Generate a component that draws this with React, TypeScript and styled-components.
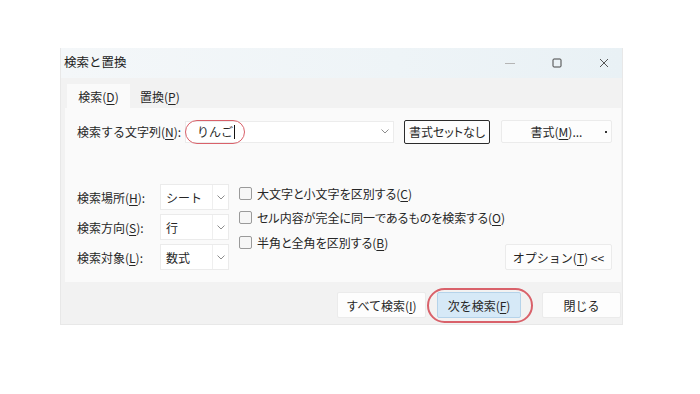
import React from "react";
import styled, { createGlobalStyle } from "styled-components";

const Global = createGlobalStyle`
  html, body { margin: 0; padding: 0; background: #ffffff; }
  body { font-family: "Noto Sans CJK JP", "Noto Sans", sans-serif; font-size: 12px; color: #262626; }
  * { box-sizing: border-box; }
`;

const Page = styled.div`
  width: 700px;
  height: 394px;
  padding: 48px 0 0 60px;
`;

const Dialog = styled.div`
  width: 563px;
  height: 277px;
  background: #f2f2f2;
  border: 1px solid #e8e8e8;
  border-top: none;
  display: flex;
  flex-direction: column;
`;

const TitleBar = styled.div`
  height: 30px;
  display: flex;
  align-items: center;
  gap: 27px;
  padding: 0 8px 0 3px;
  background: linear-gradient(90deg, #f4f7f9 0%, #eef4f7 60%, #e9f1f5 100%);
`;

const Title = styled.div`
  flex: 1;
  font-size: 12.5px;
  color: #222;
  margin-top: -4px;
`;

const WinButton = styled.div`
  width: 20px;
  height: 30px;
  display: flex;
  align-items: center;
  justify-content: center;
`;

const TabStrip = styled.div`
  height: 30px;
  display: flex;
  align-items: flex-end;
  padding-left: 6px;
`;

const Tab = styled.div<{ $active?: boolean }>`
  height: 24px;
  width: ${(p) => (p.$active ? "63px" : "auto")};
  padding: ${(p) => (p.$active ? "0" : "0 0 0 10px")};
  display: flex;
  align-items: center;
  justify-content: center;
  background: ${(p) => (p.$active ? "#fafafa" : "transparent")};
  font-size: 12px;
`;

const U = styled.span`
  text-decoration: underline;
  text-underline-offset: 2px;
`;

const Panel = styled.div`
  margin: 0 1px 0 4px;
  height: 174px;
  background: #fafafa;
  padding: 12px 9px 12px 12px;
  display: flex;
  flex-direction: column;
  justify-content: space-between;
`;

const SearchRow = styled.div`
  display: flex;
  align-items: center;
  height: 23px;
`;

const FieldLabel = styled.div`
  width: 108px;
  white-space: nowrap;
`;

const Combo = styled.div`
  position: relative;
  width: 209px;
  height: 22px;
  background: #ffffff;
  border: 1px solid #ececec;
  display: flex;
  align-items: center;
  padding-left: 11px;
`;

const Caret = styled.span`
  display: inline-block;
  width: 1px;
  height: 14px;
  background: #111;
  margin-left: 1px;
  vertical-align: middle;
`;

const Oval = styled.div<{ $t: number; $r: number; $b: number; $l: number; $w: number; $rad: number }>`
  position: absolute;
  top: ${(p) => p.$t}px;
  right: ${(p) => p.$r}px;
  bottom: ${(p) => p.$b}px;
  left: ${(p) => p.$l}px;
  border: ${(p) => p.$w}px solid #d9616a;
  border-radius: ${(p) => p.$rad}px;
  pointer-events: none;
`;

const Arrow = styled.div<{ $divider?: boolean }>`
  position: absolute;
  right: 0;
  top: 0;
  bottom: 0;
  width: 16px;
  display: flex;
  align-items: center;
  justify-content: center;
  border-left: ${(p) => (p.$divider ? "1px solid #efefef" : "none")};
`;

const Button = styled.div<{
  $w: number;
  $h?: number;
  $primary?: boolean;
  $strong?: boolean;
  $ml?: number;
  $mr?: number;
}>`
  position: relative;
  width: ${(p) => p.$w}px;
  height: ${(p) => p.$h ?? 26}px;
  margin-left: ${(p) => p.$ml ?? 0}px;
  margin-right: ${(p) => p.$mr ?? 0}px;
  flex-shrink: 0;
  display: flex;
  align-items: center;
  justify-content: center;
  background: ${(p) => (p.$primary ? "#d6e9f7" : "#fdfdfd")};
  border: 1px solid ${(p) => (p.$strong ? "#2b2b2b" : p.$primary ? "#b5d3ea" : "#ebebeb")};
  border-radius: 2px;
  white-space: nowrap;
  font-size: 12px;
  font-feature-settings: ${(p) => (p.$strong ? '"palt"' : "normal")};
`;

const Dot = styled.span`
  position: absolute;
  right: 4px;
  top: 10px;
  width: 2px;
  height: 2px;
  background: #333;
`;

const Options = styled.div`
  display: flex;
  align-items: flex-end;
`;

const SelectGrid = styled.div`
  display: grid;
  grid-template-columns: 83px 69px;
  row-gap: 4px;
  align-items: center;
  flex-shrink: 0;
`;

const Select = styled.div`
  position: relative;
  height: 26px;
  background: #ffffff;
  border: 1px solid #ebebeb;
  display: flex;
  align-items: center;
  padding-left: 5px;
`;

const Checks = styled.div`
  margin-left: 10px;
  align-self: flex-start;
  display: flex;
  flex-direction: column;
  gap: 6.5px;
  flex: 1;
  min-width: 0;
  white-space: nowrap;
  font-feature-settings: "palt";
`;

const CheckRow = styled.div`
  display: flex;
  align-items: center;
  height: 18px;
`;

const Box = styled.span`
  width: 13px;
  height: 13px;
  flex-shrink: 0;
  border: 1px solid #9a9a9a;
  border-radius: 2px;
  background: #f6f6f6;
  margin-right: 5px;
`;

const Footer = styled.div`
  flex: 1;
  display: flex;
  justify-content: flex-end;
  align-items: flex-start;
  padding: 10px 1px 0 0;
  gap: 11px;
`;

const Chevron = () => (
  <svg width="8" height="5" viewBox="0 0 8 5">
    <path d="M0.5 0.5 L4 4 L7.5 0.5" fill="none" stroke="#8d8d8d" strokeWidth="1" />
  </svg>
);

export default function App() {
  return (
    <Page>
      <Global />
      <Dialog>
        <TitleBar>
          <Title>検索と置換</Title>
          <WinButton>
            <svg width="10" height="10" viewBox="0 0 10 10">
              <path d="M0 5.5 H10" stroke="#b5b5b5" strokeWidth="1" />
            </svg>
          </WinButton>
          <WinButton>
            <svg width="10" height="10" viewBox="0 0 10 10">
              <rect x="1" y="1" width="8" height="8" rx="1" fill="none" stroke="#444" strokeWidth="1" />
            </svg>
          </WinButton>
          <WinButton>
            <svg width="10" height="10" viewBox="0 0 10 10">
              <path d="M1 1 L9 9 M9 1 L1 9" stroke="#555" strokeWidth="1" />
            </svg>
          </WinButton>
        </TitleBar>
        <TabStrip>
          <Tab $active>
            検索(<U>D</U>)
          </Tab>
          <Tab>
            置換(<U>P</U>)
          </Tab>
        </TabStrip>
        <Panel>
          <SearchRow>
            <FieldLabel>
              検索する文字列(<U>N</U>):
            </FieldLabel>
            <Combo>
              りんご
              <Caret />
              <Oval $t={-2} $r={148} $b={-2} $l={-1} $w={1.5} $rad={12} />
              <Arrow>
                <Chevron />
              </Arrow>
            </Combo>
            <Button $w={86} $h={24} $strong $ml={10}>
              書式セットなし
            </Button>
            <Button $w={111} $h={23} $ml={11}>
              書式(<U>M</U>)...
              <Dot />
            </Button>
          </SearchRow>
          <Options>
            <SelectGrid>
              <span>
                検索場所(<U>H</U>):
              </span>
              <Select>
                シート
                <Arrow $divider>
                  <Chevron />
                </Arrow>
              </Select>
              <span>
                検索方向(<U>S</U>):
              </span>
              <Select>
                行
                <Arrow $divider>
                  <Chevron />
                </Arrow>
              </Select>
              <span>
                検索対象(<U>L</U>):
              </span>
              <Select>
                数式
                <Arrow $divider>
                  <Chevron />
                </Arrow>
              </Select>
            </SelectGrid>
            <Checks>
              <CheckRow>
                <Box />
                大文字と小文字を区別する(<U>C</U>)
              </CheckRow>
              <CheckRow>
                <Box />
                セル内容が完全に同一であるものを検索する(<U>O</U>)
              </CheckRow>
              <CheckRow>
                <Box />
                半角と全角を区別する(<U>B</U>)
              </CheckRow>
            </Checks>
            <Button $w={107} $h={26}>
              オプション(<U>T</U>) &lt;&lt;
            </Button>
          </Options>
        </Panel>
        <Footer>
          <Button $w={89}>
            すべて検索(<U>I</U>)
          </Button>
          <Button $w={84} $primary $mr={10}>
            次を検索(<U>F</U>)
            <Oval $t={-5} $r={-13} $b={-6} $l={-11} $w={2} $rad={18} />
          </Button>
          <Button $w={79}>閉じる</Button>
        </Footer>
      </Dialog>
    </Page>
  );
}
